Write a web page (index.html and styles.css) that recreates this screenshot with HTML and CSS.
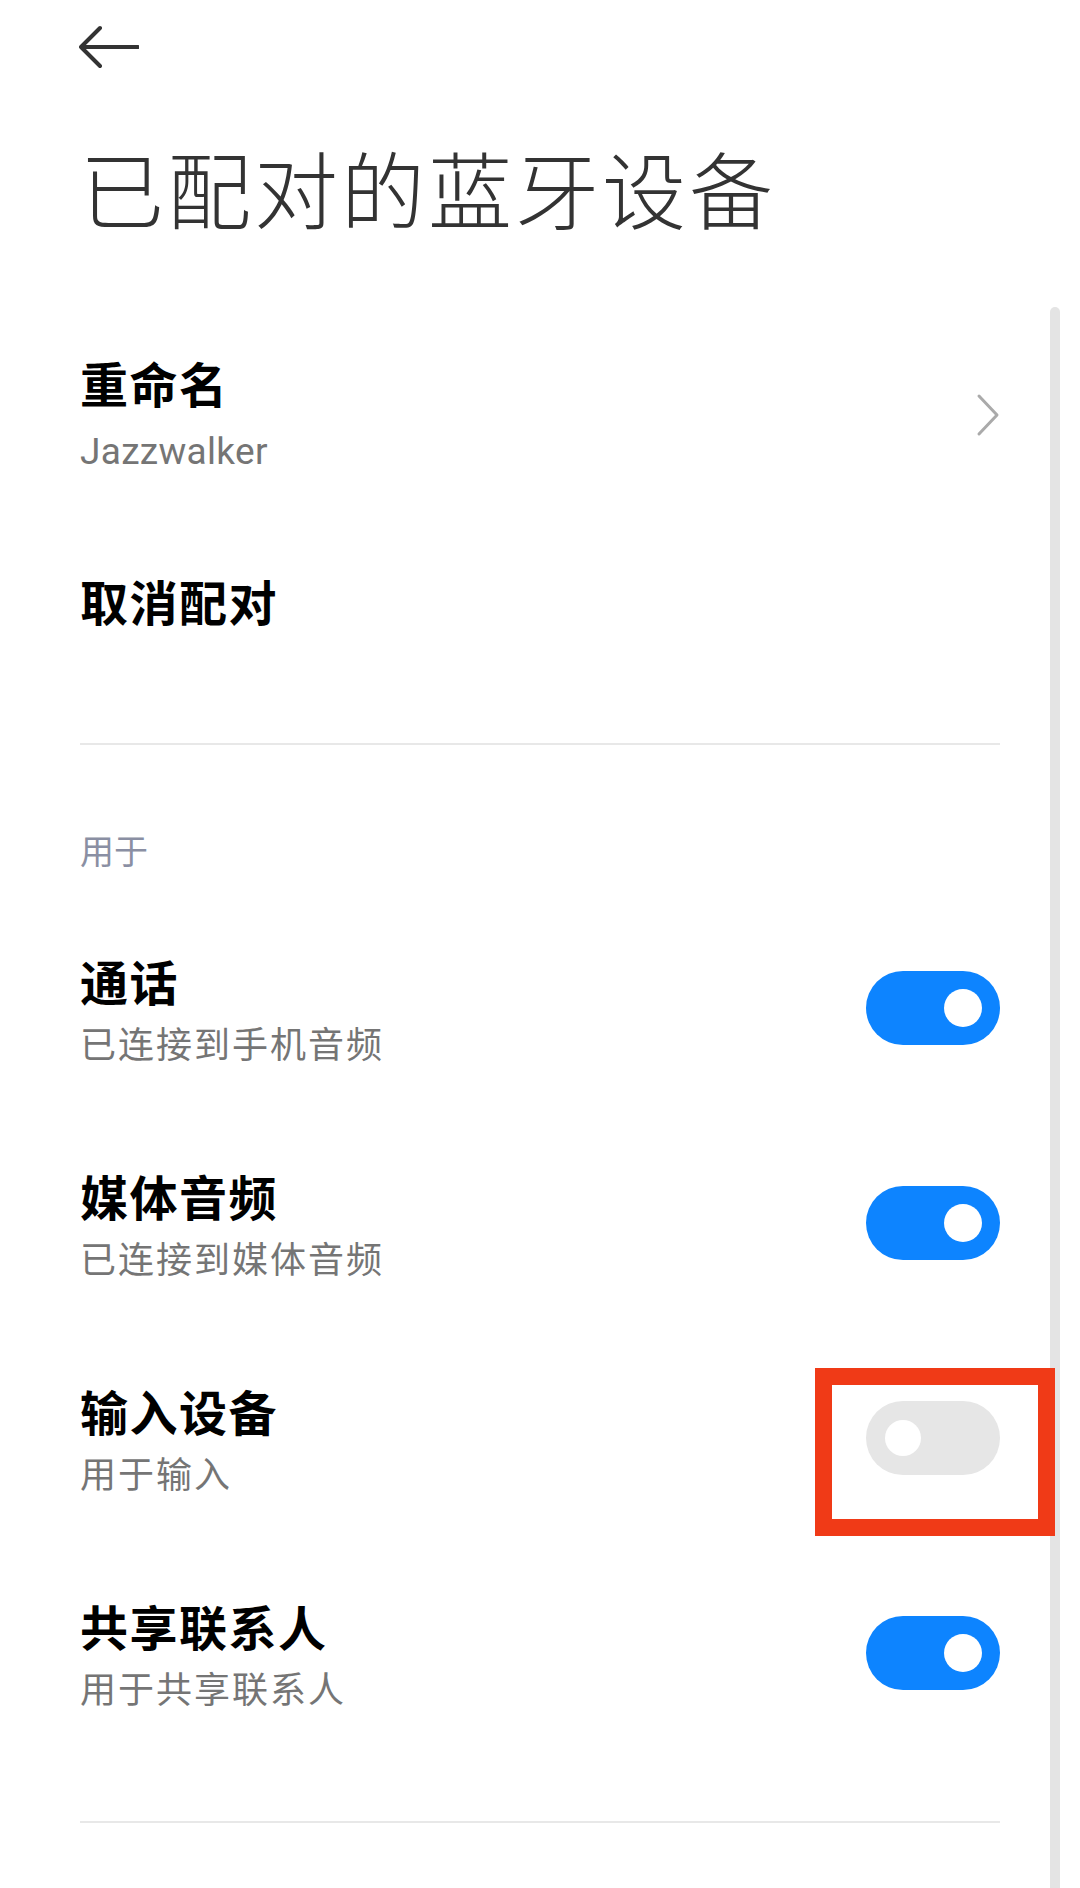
FILE: index.html
```html
<!DOCTYPE html>
<html lang="zh-CN">
<head>
    <meta charset="UTF-8">
    <meta name="viewport" content="width=device-width, initial-scale=1.0">
    <title>已配对的蓝牙设备</title>
    <link rel="stylesheet" href="styles.css">
</head>
<body>
    <div class="page">
        <header class="topbar">
            <button class="back" aria-label="返回">
                <svg width="60" height="44" viewBox="0 0 60 44">
                    <path d="M2 22 H59 M21 3 L2 22 L21 41" fill="none" stroke="#333" stroke-width="4" stroke-linecap="round" stroke-linejoin="round"/>
                </svg>
            </button>
        </header>

        <h1 class="page-title">已配对的蓝牙设备</h1>

        <ul class="list list-top">
            <li class="item item-rename">
                <div class="text">
                    <div class="label">重命名</div>
                    <div class="sub sub-latin">Jazzwalker</div>
                </div>
                <svg class="chevron" width="24" height="46" viewBox="0 0 24 46">
                    <path d="M3 3 L21 22 L3 41" fill="none" stroke="#aaa" stroke-width="3" stroke-linecap="round" stroke-linejoin="round"/>
                </svg>
            </li>
            <li class="item">
                <div class="text">
                    <div class="label">取消配对</div>
                </div>
            </li>
        </ul>

        <div class="divider"></div>

        <div class="section-head">用于</div>

        <ul class="list list-switches">
            <li class="item">
                <div class="text">
                    <div class="label">通话</div>
                    <div class="sub">已连接到手机音频</div>
                </div>
                <span class="switch on"><span class="knob"></span></span>
            </li>
            <li class="item">
                <div class="text">
                    <div class="label">媒体音频</div>
                    <div class="sub">已连接到媒体音频</div>
                </div>
                <span class="switch on"><span class="knob"></span></span>
            </li>
            <li class="item">
                <div class="text">
                    <div class="label">输入设备</div>
                    <div class="sub">用于输入</div>
                </div>
                <span class="switch">
                    <span class="knob"></span>
                    <span class="highlight"></span>
                </span>
            </li>
            <li class="item">
                <div class="text">
                    <div class="label">共享联系人</div>
                    <div class="sub">用于共享联系人</div>
                </div>
                <span class="switch on"><span class="knob"></span></span>
            </li>
        </ul>

        <div class="divider divider-bottom"></div>

        <div class="scrollbar"></div>
    </div>
</body>
</html>
```

FILE: styles.css
```css
* {
    margin: 0;
    padding: 0;
    box-sizing: border-box;
}

body {
    font-family: 'Roboto', 'Noto Sans CJK SC', sans-serif;
    background: #fff;
    color: #000;
}

.page {
    position: relative;
    width: 1080px;
    min-height: 1888px;
    padding: 0 80px;
    overflow: hidden;
}

/* top bar with back arrow */
.topbar {
    height: 94px;
    display: flex;
    align-items: center;
}

.back {
    display: flex;
    border: none;
    background: transparent;
    margin-left: -1px;
}

.page-title {
    margin-top: 41px;
    font-family: 'Noto Sans CJK SC', sans-serif;
    font-size: 84px;
    font-weight: 300;
    line-height: 104px;
    letter-spacing: 3px;
    color: #333;
}

/* list rows */
.list {
    list-style: none;
}

.list-top {
    margin-top: 64px;
}

.item {
    display: flex;
    align-items: center;
    justify-content: space-between;
    padding: 50px 0;
}

.item-rename {
    padding-bottom: 46px;
}

.list-switches .item {
    padding: 51px 0 50px;
}

.label {
    font-family: 'Noto Sans CJK SC', sans-serif;
    font-size: 48px;
    font-weight: 700;
    line-height: 58px;
    letter-spacing: 1.5px;
    color: #000;
}

.sub {
    margin-top: 10px;
    font-family: 'Noto Sans CJK SC', sans-serif;
    font-size: 36px;
    line-height: 46px;
    letter-spacing: 2px;
    color: #757575;
}

.sub-latin {
    margin-top: 18px;
    font-family: 'Roboto', sans-serif;
    font-size: 37px;
    letter-spacing: 0.3px;
}

.chevron {
    margin-top: 4px;
}

.divider {
    margin-top: 64px;
    height: 2px;
    background: #e8e8e8;
}

.divider-bottom {
    margin-top: 61px;
}

.section-head {
    margin-top: 82px;
    margin-bottom: 27px;
    font-family: 'Noto Sans CJK SC', sans-serif;
    font-size: 34px;
    line-height: 46px;
    color: #8a8fa3;
}

/* toggle switch */
.switch {
    position: relative;
    flex-shrink: 0;
    display: flex;
    align-items: center;
    width: 134px;
    height: 74px;
    padding: 0 19px;
    border-radius: 37px;
    background: #e6e6e6;
}

.switch.on {
    justify-content: flex-end;
    padding: 0 18px;
    background: #0d84ff;
}

.knob {
    width: 36px;
    height: 36px;
    border-radius: 50%;
    background: #fff;
}

.switch.on .knob {
    width: 38px;
    height: 38px;
}

/* red marker drawn around the input-device switch */
.highlight {
    position: absolute;
    z-index: 2;
    top: -33px;
    left: -51px;
    width: 240px;
    height: 168px;
    border: 17px solid #f03a17;
}

/* scroll indicator on the right edge */
.scrollbar {
    position: absolute;
    z-index: 1;
    top: 307px;
    left: 1050px;
    width: 10px;
    height: 1600px;
    border-radius: 5px 5px 0 0;
    background: #e4e4e4;
}
```
